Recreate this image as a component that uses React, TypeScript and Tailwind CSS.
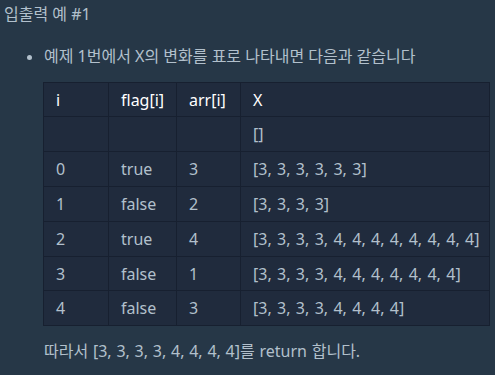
import React from "react";

const rows: [string, string, string, string][] = [
  ["", "", "", "[]"],
  ["0", "true", "3", "[3, 3, 3, 3, 3, 3]"],
  ["1", "false", "2", "[3, 3, 3, 3]"],
  ["2", "true", "4", "[3, 3, 3, 3, 4, 4, 4, 4, 4, 4, 4, 4]"],
  ["3", "false", "1", "[3, 3, 3, 3, 4, 4, 4, 4, 4, 4, 4]"],
  ["4", "false", "3", "[3, 3, 3, 3, 4, 4, 4, 4]"],
];

const heights = ["h-[35px]", "h-[35px]", "h-[35px]", "h-[35px]", "h-[34px]", "h-[35px]"];

export default function App() {
  return (
    <div
      className="w-[495px] h-[375px] overflow-hidden bg-[#263747] text-[#b2c0cc]"
      style={{ fontFamily: '"Noto Sans", "Noto Sans CJK KR", sans-serif' }}
    >
      <div className="pl-[4px] pt-[2px] text-[16px] leading-[24px]">입출력 예 #1</div>
      <div className="mt-[18px] flex items-center pl-[27px] text-[16px] leading-[24px]">
        <span className="mr-[12px] mt-[3px] inline-block h-[5px] w-[5px] rounded-full bg-[#b2c0cc]" />
        <span>예제 1번에서 X의 변화를 표로 나타내면 다음과 같습니다</span>
      </div>
      <table className="ml-[43px] mt-[14px] table-fixed border-collapse bg-[#202b3d] text-[16px] w-[446px] [word-spacing:1.2px]">
        <colgroup>
          <col className="w-[65px]" />
          <col className="w-[68px]" />
          <col className="w-[64px]" />
          <col className="w-[249px]" />
        </colgroup>
        <thead>
          <tr>
            {["i", "flag[i]", "arr[i]", "X"].map((h) => (
              <th
                key={h}
                className="h-[34px] border border-[#172030] pl-[12px] text-left font-normal text-white"
              >
                {h}
              </th>
            ))}
          </tr>
        </thead>
        <tbody>
          {rows.map((r, i) => (
            <tr key={i} className={heights[i]}>
              {r.map((c, j) => (
                <td
                  key={j}
                  className="border border-[#172030] pl-[12px] whitespace-nowrap"
                >
                  {c}
                </td>
              ))}
            </tr>
          ))}
        </tbody>
      </table>
      <div className="ml-[44px] mt-[13px] text-[16px] leading-[24px] [word-spacing:0.6px]">
        따라서 [3, 3, 3, 3, 4, 4, 4, 4]를 return 합니다.
      </div>
    </div>
  );
}
